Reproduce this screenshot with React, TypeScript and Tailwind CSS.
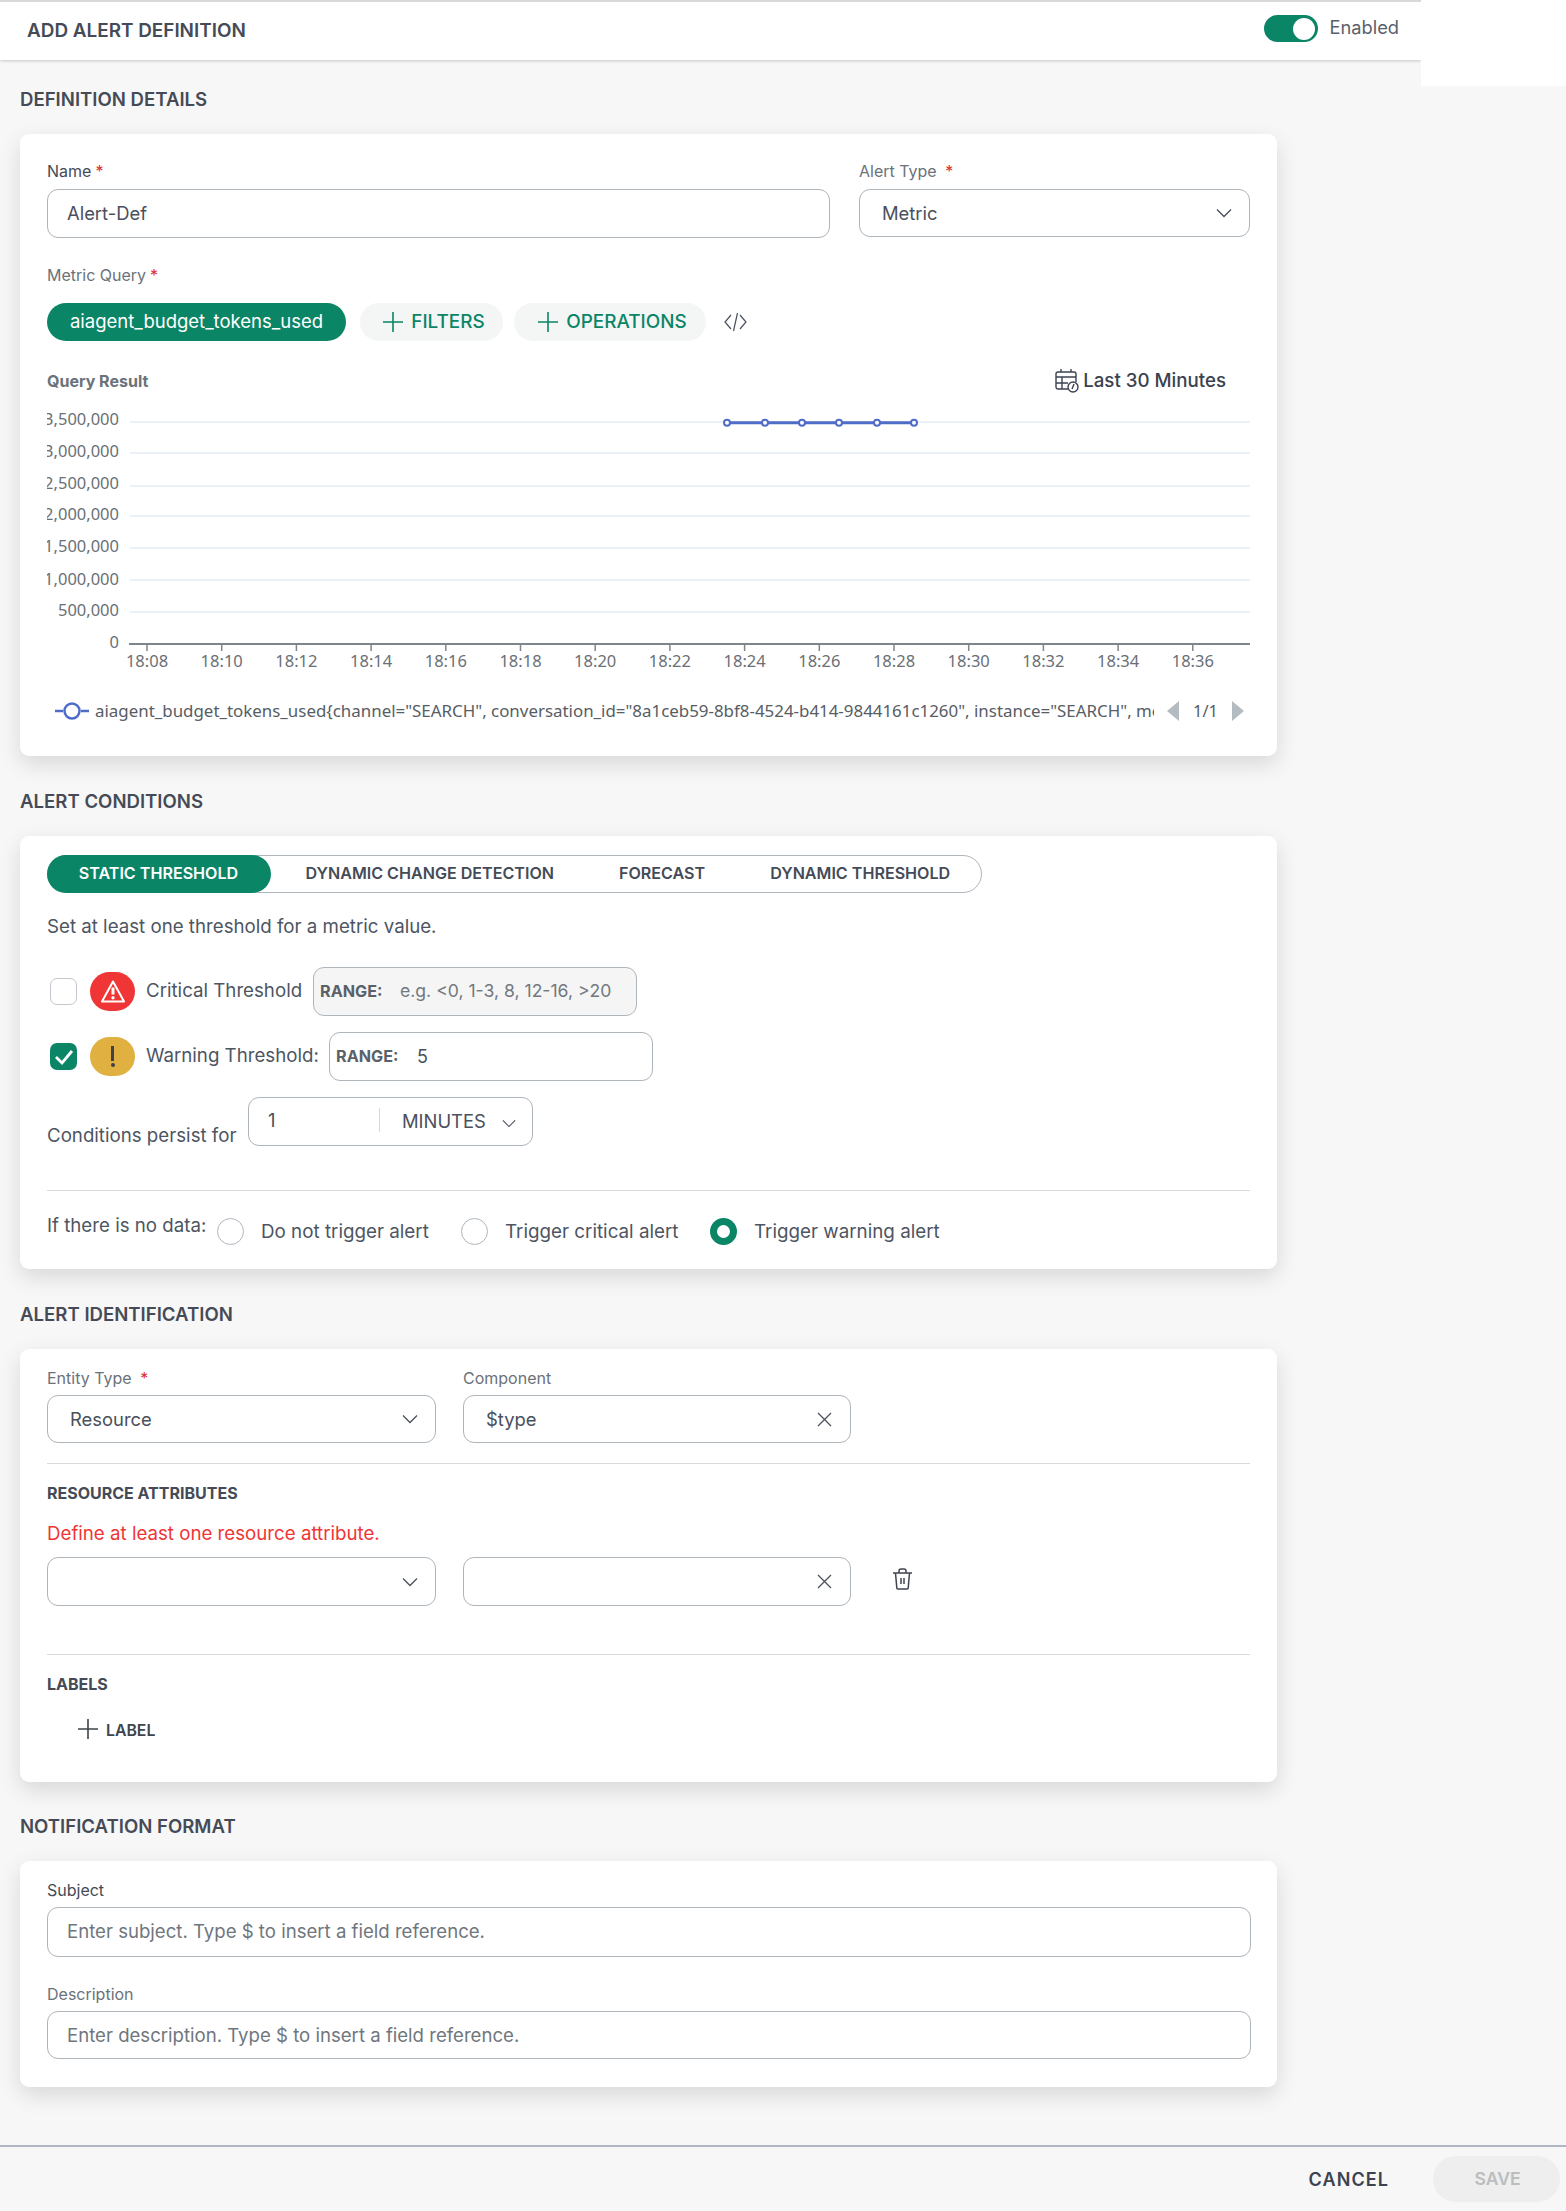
const yLabels = ["3,500,000", "3,000,000", "2,500,000", "2,000,000", "1,500,000", "1,000,000", "500,000", "0"];
const gridYs = [17, 48, 81, 111, 143, 175, 207];
const labelYs = [20, 52, 84, 115, 147, 180, 211, 243];
const times = ["18:08", "18:10", "18:12", "18:14", "18:16", "18:18", "18:20", "18:22", "18:24", "18:26", "18:28", "18:30", "18:32", "18:34", "18:36"];
const points = [680, 718, 755, 792, 830, 867];

function Req() {
  return <span className="text-[#e02b2b] ml-[4px]">*</span>;
}

function Label({ children, dark }: { children: React.ReactNode; dark?: boolean }) {
  return <div className={`h-[20px] text-[16px] leading-[19px] ${dark ? "text-[#454b56]" : "text-[#6b7279]"}`}>{children}</div>;
}

function Chevron({ className }: { className?: string }) {
  return (
    <svg viewBox="0 0 16 10" className={className} fill="none" stroke="#4a505c" strokeWidth="1.3">
      <path d="M1 1.5 8 8.5 15 1.5" />
    </svg>
  );
}

function Cross() {
  return (
    <svg viewBox="0 0 15 15" className="w-[15px] h-[15px]" fill="none" stroke="#4a505c" strokeWidth="1.3">
      <path d="M1 1 14 14M14 1 1 14" />
    </svg>
  );
}

function Plus({ color, size }: { color: string; size: string }) {
  return (
    <svg viewBox="0 0 20 20" className={size} fill="none" stroke={color} strokeWidth="1.6">
      <path d="M10 0v20M0 10h20" />
    </svg>
  );
}

function SectionTitle({ children, className }: { children: React.ReactNode; className: string }) {
  return <h2 className={`h-[24px] text-[18.6px] leading-[24px] font-semibold text-[#454b56] ${className}`}>{children}</h2>;
}

function Card({ children, className }: { children: React.ReactNode; className: string }) {
  return <section className={`w-[1257px] px-[27px] bg-white rounded-[9px] shadow-[0_8px_22px_rgba(0,0,0,0.13)] ${className}`}>{children}</section>;
}

function SelectBox({ value, className }: { value?: string; className: string }) {
  return (
    <div className={`flex items-center justify-between pl-[22px] pr-[17px] bg-white border-[1.5px] border-[#aeb5bb] rounded-[11px] text-[18.4px] text-[#4a505c] ${className}`}>
      <span className="mt-[1px]">{value}</span>
      <Chevron className="w-[16px] h-[10px]" />
    </div>
  );
}

function ClearBox({ value, className }: { value?: string; className: string }) {
  return (
    <div className={`flex items-center justify-between pl-[22px] pr-[18px] bg-white border-[1.5px] border-[#aeb5bb] rounded-[11px] text-[18.4px] text-[#4a505c] ${className}`}>
      <span className="mt-[1px]">{value}</span>
      <Cross />
    </div>
  );
}

function TextBox({ placeholder, className }: { placeholder: string; className: string }) {
  return (
    <div className={`flex items-center pl-[19px] bg-white border-[1.5px] border-[#aeb5bb] rounded-[11px] text-[18.6px] text-[#6f767d] ${className}`}>
      {placeholder}
    </div>
  );
}

function Radio({ label, on, className }: { label: string; on?: boolean; className: string }) {
  return (
    <div className={`flex items-start ${className}`}>
      <span className={`w-[27px] h-[27px] mt-[4px] rounded-full bg-white ${on ? "border-[7px] border-[#0a8566]" : "border-[1.5px] border-[#aeb5bb]"}`} />
      <span className="ml-[17px] mt-[6px] h-[24px] leading-[24px] text-[18.8px] text-[#4d5562] whitespace-nowrap">{label}</span>
    </div>
  );
}

function Chart() {
  return (
    <svg viewBox="0 0 1203 280" className="mt-[14px] w-[1203px] h-[280px] block" style={{ fontFamily: '"Noto Sans", sans-serif' }}>
      {gridYs.map((y) => (
        <line key={y} x1="83" x2="1203" y1={y} y2={y} stroke="#ebeff7" strokeWidth="2" />
      ))}
      {yLabels.map((t, i) => (
        <text key={t} x="72" y={labelYs[i] + 0} textAnchor="end" fontSize="16.5" fill="#6a7076">
          {t}
        </text>
      ))}
      <line x1="82" x2="1203" y1="239" y2="239" stroke="#7f858b" strokeWidth="2" />
      {times.map((t, i) => {
        const x = 100 + i * 74.7;
        return (
          <g key={t}>
            <line x1={x} x2={x} y1="239" y2="246" stroke="#7f858b" strokeWidth="1.5" />
            <text x={x} y="262" textAnchor="middle" fontSize="16.5" fill="#6a7076">
              {t}
            </text>
          </g>
        );
      })}
      <line x1={points[0]} x2={points[5]} y1="17.7" y2="17.7" stroke="#4f6cc9" strokeWidth="3" />
      {points.map((x) => (
        <circle key={x} cx={x} cy="17.7" r="3" fill="#fff" stroke="#4f6cc9" strokeWidth="2" />
      ))}
    </svg>
  );
}

export default function App() {
  return (
    <div className="w-[1566px] h-[2211px] overflow-hidden bg-[#f7f7f7] text-[#4a505c]" style={{ fontFamily: "Inter, sans-serif" }}>
      <div className="flex items-start h-[2145px]">
        <div className="w-[1421px] shrink-0">
          <header className="h-[60px] bg-white border-t-2 border-[#d9d9d9] shadow-[0_1px_3px_rgba(0,0,0,0.2)] flex items-center justify-between pl-[27px] pr-[22px]">
            <h1 className="text-[18.9px] font-semibold text-[#454b56]">ADD ALERT DEFINITION</h1>
            <div className="flex items-center -mt-[5px]">
              <div className="w-[54px] h-[27px] rounded-full bg-[#0a8566] flex items-center justify-end pr-[3px]">
                <span className="w-[22px] h-[22px] rounded-full bg-white" />
              </div>
              <span className="ml-[11px] -mt-[2px] text-[18.3px] text-[#5a616c]">Enabled</span>
            </div>
          </header>

          <div className="pl-[20px]">
            <SectionTitle className="mt-[27px] mb-[23px]">DEFINITION DETAILS</SectionTitle>
            <Card className="h-[622px] pt-[28px]">
              <div className="flex">
                <div className="w-[783px]">
                  <Label dark>Name<Req /></Label>
                  <div className="mt-[7px] h-[49px] flex items-center pl-[19px] border-[1.5px] border-[#aeb5bb] rounded-[11px] text-[18.4px] text-[#4a505c]">Alert-Def</div>
                </div>
                <div className="ml-[29px] w-[391px]">
                  <Label>Alert Type <Req /></Label>
                  <SelectBox value="Metric" className="mt-[7px] h-[48px]" />
                </div>
              </div>
              <div className="mt-[28px]"><Label>Metric Query<Req /></Label></div>
              <div className="mt-[17px] flex items-center h-[38px]">
                <span className="w-[299px] h-[38px] rounded-full bg-[#0a8566] text-white text-[18.5px] flex items-center justify-center">aiagent_budget_tokens_used</span>
                <span className="ml-[14px] w-[143px] h-[38px] pl-[5px] rounded-full bg-[#f4f5f5] text-[#0a8566] text-[18.9px] font-medium flex items-center justify-center gap-[8px]">
                  <Plus color="#0a8566" size="w-[20px] h-[20px]" />FILTERS
                </span>
                <span className="ml-[11px] w-[192px] h-[38px] pl-[5px] rounded-full bg-[#f4f5f5] text-[#0a8566] text-[18.9px] font-medium flex items-center justify-center gap-[8px]">
                  <Plus color="#0a8566" size="w-[20px] h-[20px]" />OPERATIONS
                </span>
                <svg viewBox="0 0 23 20" className="ml-[18px] w-[23px] h-[20px]" fill="none" stroke="#4a505c" strokeWidth="1.2">
                  <path d="M7 3 1 10l6 7M16 3l6 7-6 7M13.5 1 9.5 19" />
                </svg>
              </div>
              <div className="mt-[30px] h-[20px] flex items-center justify-between pr-[24px]">
                <span className="text-[16px] font-bold text-[#6b7279]">Query Result</span>
                <span className="flex items-center text-[18.7px] font-medium text-[#3b4250]">
                  <svg viewBox="0 0 24 24" className="w-[24px] h-[24px] mr-[4px]" fill="none" stroke="#3b4250" strokeWidth="1.4">
                    <path d="M6 0v3M16 0v3M13 20H3a2 2 0 0 1-2-2V5a2 2 0 0 1 2-2h16a2 2 0 0 1 2 2v8M1 8h20M1 14h12M7 8v12" />
                    <circle cx="18" cy="18" r="5" />
                    <path d="m19 15-2 5" />
                  </svg>
                  Last 30 Minutes
                </span>
              </div>
              <div className="w-[1203px]">
                <Chart />
              </div>
              <div className="mt-[12px] h-[28px] flex items-center" style={{ fontFamily: '"Noto Sans", sans-serif' }}>
                <svg viewBox="0 0 34 18" className="ml-[8px] w-[34px] h-[18px] shrink-0" fill="none" stroke="#4f6cc9" strokeWidth="2.5">
                  <path d="M0 9h8M26 9h8" />
                  <circle cx="17" cy="9" r="7.5" fill="#fff" />
                </svg>
                <span className="ml-[6px] w-[1059px] shrink-0 overflow-hidden whitespace-nowrap text-[16.9px] text-[#575d64]">
                  aiagent_budget_tokens_used{'{'}channel="SEARCH", conversation_id="8a1ceb59-8bf8-4524-b414-9844161c1260", instance="SEARCH", mc
                </span>
                <span className="ml-[13px] w-0 h-0 border-y-[10px] border-y-transparent border-r-[12px] border-r-[#b4bcc2]" />
                <span className="ml-[14px] w-[24px] text-[16.5px] text-[#575d64]">1/1</span>
                <span className="ml-[15px] w-0 h-0 border-y-[10px] border-y-transparent border-l-[12px] border-l-[#b4bcc2]" />
              </div>
            </Card>

            <SectionTitle className="mt-[33px] mb-[23px]">ALERT CONDITIONS</SectionTitle>
            <Card className="h-[433px] pt-[19px]">
              <div className="w-[935px] h-[38px] rounded-full border-[1.5px] border-[#aeb5bb] flex items-center text-[16.1px] font-semibold text-[#454b56] whitespace-nowrap">
                <span className="-ml-[1.5px] w-[224px] h-[38px] pb-[1px] shrink-0 rounded-full bg-[#0a8566] text-white flex items-center justify-center">STATIC THRESHOLD</span>
                <span className="ml-[35px] -mt-[1px]">DYNAMIC CHANGE DETECTION</span>
                <span className="ml-[65px] -mt-[1px]">FORECAST</span>
                <span className="ml-[65px] -mt-[1px]">DYNAMIC THRESHOLD</span>
              </div>
              <p className="mt-[22px] h-[24px] leading-[24px] text-[18.7px] text-[#4d5562]">Set at least one threshold for a metric value.</p>

              <div className="mt-[28px] h-[49px] flex items-center">
                <span className="ml-[3px] w-[27px] h-[27px] rounded-[7px] bg-white border-[1.5px] border-[#c2c8ce]" />
                <span className="ml-[13px] w-[45px] h-[39px] rounded-full bg-[#ef3535] flex items-center justify-center">
                  <svg viewBox="0 0 26 24" className="w-[26px] h-[25px]" fill="none" stroke="#fff" strokeWidth="2" strokeLinejoin="round">
                    <path d="M13 2 2 22h22Z" />
                    <path d="M13 8v7" strokeWidth="3" />
                    <circle cx="13" cy="18.2" r="1.7" fill="#fff" stroke="none" />
                  </svg>
                </span>
                <span className="ml-[11px] w-[167px] text-[18.7px] text-[#4d5562] whitespace-nowrap">Critical Threshold</span>
                <div className="w-[324px] h-[49px] flex items-center pl-[6px] bg-[#f5f5f5] border-[1.5px] border-[#aeb5bb] rounded-[11px]">
                  <span className="w-[80px] text-[16.2px] font-bold text-[#5b6168]">RANGE:</span>
                  <span className="text-[17.6px] text-[#72787e]">e.g. &lt;0, 1-3, 8, 12-16, &gt;20</span>
                </div>
              </div>

              <div className="mt-[16px] h-[49px] flex items-center">
                <span className="ml-[3px] w-[27px] h-[27px] rounded-[7px] bg-[#0a8566] flex items-center justify-center">
                  <svg viewBox="0 0 20 18" className="w-[20px] h-[18px]" fill="none" stroke="#fff" strokeWidth="2.8">
                    <path d="m2 9 6 6L18 3" />
                  </svg>
                </span>
                <span className="ml-[13px] w-[45px] h-[39px] rounded-full bg-[#e0b040] flex flex-col items-center justify-center">
                  <span className="w-[3px] h-[15px] bg-[#3f4248]" />
                  <span className="mt-[2px] w-[4px] h-[4px] rounded-full bg-[#3f4248]" />
                </span>
                <span className="ml-[11px] w-[183px] text-[18.7px] text-[#4d5562] whitespace-nowrap">Warning Threshold:</span>
                <div className="w-[324px] h-[49px] flex items-center pl-[6px] bg-white border-[1.5px] border-[#aeb5bb] rounded-[11px]">
                  <span className="w-[81px] text-[16.2px] font-bold text-[#5b6168]">RANGE:</span>
                  <span className="text-[18px] text-[#4a505c]">5</span>
                </div>
              </div>

              <div className="mt-[16px] h-[49px] flex items-start">
                <span className="mt-[27px] w-[201px] h-[24px] leading-[24px] text-[18.7px] text-[#4d5562] whitespace-nowrap">Conditions persist for</span>
                <div className="w-[285px] h-[49px] flex items-center bg-white border-[1.5px] border-[#aeb5bb] rounded-[11px] text-[18.4px] text-[#4a505c]">
                  <span className="ml-[19px] w-[111px] -mt-[2px]">1</span>
                  <span className="w-px h-[24px] bg-[#d5d9dc] -mt-[3px]" />
                  <span className="ml-[22px] w-[100px] mt-[1px]">MINUTES</span>
                  <Chevron className="w-[14px] h-[9px] mt-[3px]" />
                </div>
              </div>

              <div className="mt-[44px] border-t-[1.5px] border-[#d9dcde]" />

              <div className="mt-[23px] flex items-start">
                <span className="w-[170px] h-[24px] leading-[24px] text-[18.7px] text-[#4d5562] whitespace-nowrap">If there is no data:</span>
                <Radio label="Do not trigger alert" className="w-[244px]" />
                <Radio label="Trigger critical alert" className="w-[249px]" />
                <Radio label="Trigger warning alert" on className="w-[260px]" />
              </div>
            </Card>

            <SectionTitle className="mt-[33px] mb-[23px]">ALERT IDENTIFICATION</SectionTitle>
            <Card className="h-[433px] pt-[20px]">
              <div className="flex gap-[27px]">
                <div className="w-[389px]">
                  <Label>Entity Type <Req /></Label>
                  <SelectBox value="Resource" className="mt-[6px] h-[48px]" />
                </div>
                <div className="w-[388px]">
                  <Label>Component</Label>
                  <ClearBox value="$type" className="mt-[6px] h-[48px]" />
                </div>
              </div>
              <div className="mt-[20px] border-t-[1.5px] border-[#d9dcde]" />
              <div className="mt-[19px] h-[20px] leading-[20px] text-[16px] font-bold text-[#454b56]">RESOURCE ATTRIBUTES</div>
              <div className="mt-[19px] h-[24px] leading-[24px] text-[18.7px] text-[#ef3535]">Define at least one resource attribute.</div>
              <div className="mt-[11px] flex gap-[27px]">
                <SelectBox className="w-[389px] h-[49px]" />
                <ClearBox className="w-[388px] h-[49px]" />
                <svg viewBox="0 0 19 22" className="ml-[15px] mt-[11px] w-[19px] h-[22px]" fill="none" stroke="#3f4550" strokeWidth="1.5">
                  <path d="M0 5h19M6 5V3a2 2 0 0 1 2-2h3a2 2 0 0 1 2 2v2M2.5 5l1.3 15a1 1 0 0 0 1 1h9.4a1 1 0 0 0 1-1L16.500 5M8 10v6M11 10v6" />
                </svg>
              </div>
              <div className="mt-[48px] border-t-[1.5px] border-[#d9dcde]" />
              <div className="mt-[19px] h-[20px] leading-[20px] text-[16px] font-bold text-[#454b56]">LABELS</div>
              <div className="mt-[25px] ml-[31px] flex items-center h-[20px]">
                <Plus color="#3e444b" size="w-[20px] h-[20px]" />
                <span className="ml-[8px] mt-[4px] text-[15.8px] font-semibold text-[#3e444b]">LABEL</span>
              </div>
            </Card>

            <SectionTitle className="mt-[32px] mb-[23px]">NOTIFICATION FORMAT</SectionTitle>
            <Card className="h-[226px] pt-[20px]">
              <Label dark>Subject</Label>
              <TextBox placeholder="Enter subject. Type $ to insert a field reference." className="mt-[6px] h-[50px] w-[1204px]" />
              <div className="mt-[28px]"><Label>Description</Label></div>
              <TextBox placeholder="Enter description. Type $ to insert a field reference." className="mt-[6px] h-[48px] pt-[1px] w-[1204px]" />
            </Card>
          </div>
        </div>
        <div className="w-[145px] h-[86px] bg-white" />
      </div>

      <footer className="h-[66px] border-t-2 border-[#aeb7c2] flex items-center justify-end pr-[6px]">
        <span className="text-[18px] font-semibold tracking-[0.06em] text-[#3b4250]">CANCEL</span>
        <span className="ml-[44px] w-[127px] h-[46px] pl-[2px] rounded-full bg-[#eeeeee] text-[#bbbdbf] text-[17.6px] font-semibold flex items-center justify-center">SAVE</span>
      </footer>
    </div>
  );
}
